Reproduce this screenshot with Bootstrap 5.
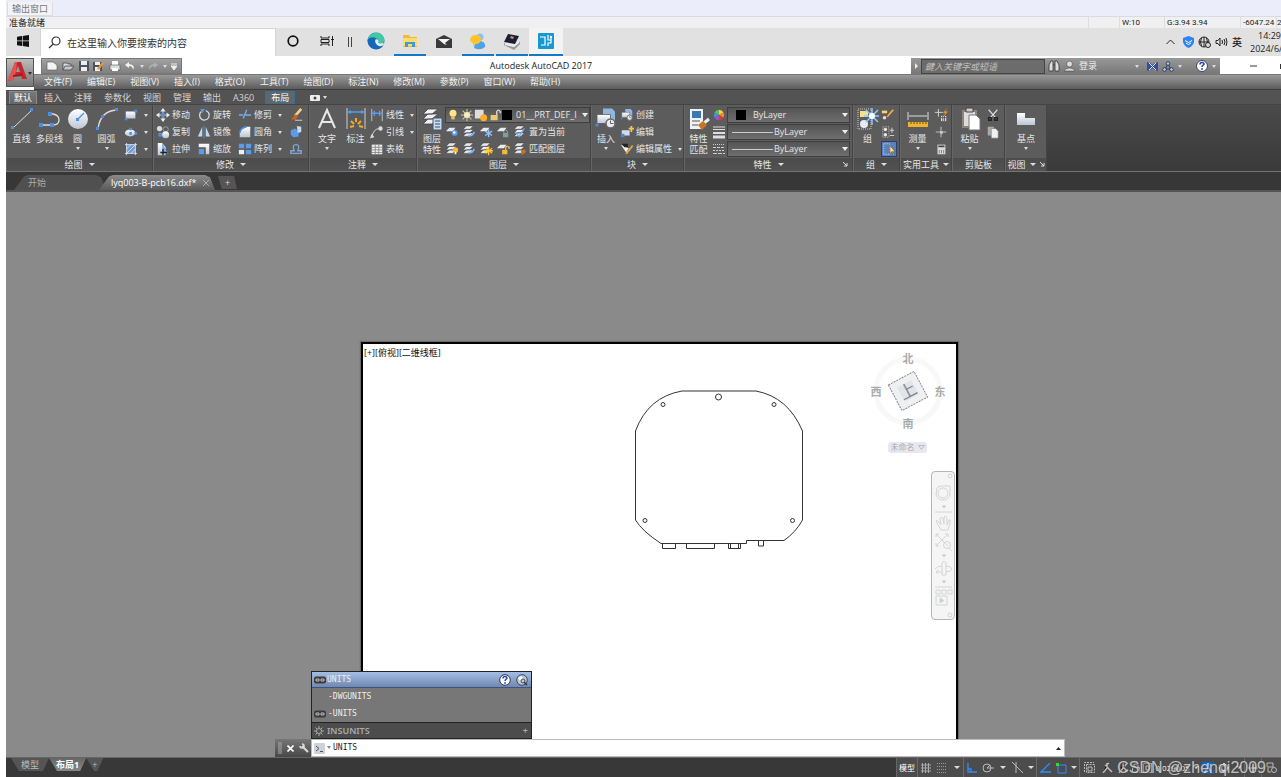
<!DOCTYPE html>
<html lang="zh-CN">
<head>
<meta charset="utf-8">
<meta name="viewport" content="width=device-width, initial-scale=1">
<title>Autodesk AutoCAD 2017</title>
<link href="https://cdn.jsdelivr.net/npm/bootstrap@5.3.0/dist/css/bootstrap.min.css" rel="stylesheet">
<style>
:root{--ui:"Open Sans","Noto Sans CJK SC",sans-serif;--mono:"DejaVu Sans Mono","Noto Sans CJK SC",monospace}
body{font-family:var(--ui);font-size:9px;line-height:12px;color:#e6e6e6;background:#fff;padding-left:6px}
button,input,select{font:inherit;color:inherit;background:none;border:0;padding:0;margin:0}
a{color:inherit;text-decoration:none}
svg{display:block;flex:none}
.i14{width:14px;height:14px}.i24{width:24px;height:24px}
.caret{width:0;height:0;border:2px solid transparent;border-top:3px solid #ddd;border-bottom:0;flex:none}
.caret.wide{border-width:3px 3px 0}
/* output window and task bar */
.outbar{height:16px;background:#ecedfa;color:#777;padding-top:2px}
.outtab{background:#f3f3f7;border:1px solid #ddd;border-top:0;padding:0 4px;height:14px;margin-left:1px}
.readybar{height:12px;background:#f0f0f0;border-top:1px solid #d8dbe2;color:#222;line-height:11px}
.readybar span{border-left:1px solid #dedede;padding-left:2px;font-family:Roboto,"Noto Sans CJK SC",sans-serif;font-size:8px;white-space:nowrap}
.taskbar{height:28px;background:#e1e1e1;color:#222}
.search{width:236px;background:#fff;border:1px solid #d5d5d5;border-bottom:0;padding-left:7px;gap:6px}
.search input{font-size:10px;flex:1;min-width:0;outline:0}
.search input::placeholder{color:#333;opacity:1}
.slot{width:34px;height:28px;border-bottom:2px solid transparent;display:flex;align-items:center;justify-content:center}
.slot.open{border-image:linear-gradient(90deg,transparent 3px,#1878c8 3px 31px,transparent 31px) 2}
.slot.current{background:#f3f3f3;border-color:#1878c8}
.clockbox{width:31px;line-height:13px;overflow:hidden;white-space:nowrap}
/* title and menu */
.logo{width:28px;height:29px;background:linear-gradient(#bbb,#777);border:1px solid #555}
.titlebar{height:16px;color:#222}
.qat{width:141px;background:linear-gradient(#a2a2a2,#808080);border:1px solid #777;padding:0 4px}
.infobar{width:309px;background:linear-gradient(#999,#777);color:#eee}
.infobar input{width:124px;height:15px;background:#6c6c6c;border:1px solid #444;font-style:italic;padding-left:3px;outline:0}
.infobar input::placeholder{color:#c2c2c2;opacity:1}
.menubar{height:16px;background:linear-gradient(#999,#5c5c5c);border-top:1px solid #777;border-bottom:1px solid #3c3c3c;gap:15px;padding-left:10px;color:#f2f2f2}
.tabs{height:14px;background:#535353;gap:2px;padding-left:3px;color:#d5d5d5}
.tabs button{height:13px;padding:0 5px;border:0 solid #777}
.tabs .on{background:linear-gradient(#777,#666);border:1px solid #8a8a8a;border-bottom:0;padding:0 4px;color:#fff}
.tabs .ctx{background:#5d686e;border:1px solid #3f6e8a;padding:0 5px;color:#fff}
/* ribbon */
.ribbon{height:68px;background:linear-gradient(#4a4a4a,#3a3a3a);border-top:1px solid #444;border-bottom:1px solid #747474}
.panel{flex:none;border-right:1px solid #444;background:#5c5c5c;border-left:1px solid #666}
.pbody{height:53px;padding-top:2px}
.pfoot{height:13px;background:linear-gradient(#4b4b4b,#525252);gap:6px}
.big{display:flex;flex-direction:column;align-items:center;line-height:11px;white-space:nowrap;flex:none}
.big svg{margin-bottom:2px}
.big .caret{margin-top:3px}
.stackcol{display:flex;flex-direction:column;gap:1px;flex:none}
.stackcol button,.rowline{height:16px;display:flex;align-items:center;gap:2px;white-space:nowrap}
.stackcol .layers{gap:3px}
.stackcol .caret{margin-left:4px}
.combo{height:16px;border:1px solid #3f3f3f;background:linear-gradient(#555,#6e6e6e);display:flex;align-items:center}
.combo select{appearance:none;flex:1;min-width:0;height:14px;line-height:14px;padding-right:12px;outline:0;
background:url("data:image/svg+xml,%3Csvg xmlns='http://www.w3.org/2000/svg' width='6' height='4'%3E%3Cpath d='M0 0h6L3 4z' fill='%23eee'/%3E%3C/svg%3E") no-repeat right 1px center}
.combo option{color:#222}
.sw{width:10px;height:10px;background:#000;flex:none}
.lw{width:41px;height:1px;background:#ccc;flex:none}
.pressed{background:#5c7fbe;border:1px solid #27406e}
/* document tabs */
.docs{height:20px;background:#373737;border-bottom:2px solid #555;padding:3px 0 0 8px}
.doctab{height:15px;white-space:nowrap;clip-path:polygon(0 100%,10px 10%,14px 0,calc(100% - 10px) 0,calc(100% - 5px) 15%,100% 100%);background:#505050;color:#aaa}
.doctab.on{background:linear-gradient(#8a8a8a,#5a5a5a);color:#fff;padding-left:12px;gap:6px}
.plus{background:#555;color:#ddd;clip-path:polygon(0 0,85% 0,100% 100%,20% 100%)}
/* drawing area */
.area{background:#8a8a8a;display:grid;grid-template-columns:355fr 597fr 323fr;grid-template-rows:150px 1fr}
.paper{grid-column:2;grid-row:2;background:#fff;border:2px solid #000;border-bottom:0;color:#111;box-shadow:0 0 1px 1px #6a6a6a}
.vlabel{padding:3px 0 0 1px}
.part{left:272px;top:45px}
.cube{right:9px;top:5px}
.pill{right:29px;top:98px;background:#e8e8f3;color:#aaa;width:39px;height:11px;border-radius:3px;line-height:11px;font-size:8px;font-family:"Liberation Serif","Noto Sans CJK SC",serif}
.navbox{right:1px;top:127px;width:24px;height:149px;background:#f5f5f5;border:1px solid #b5b5b5;border-radius:4px}
/* command line */
.cmd{left:269px;bottom:0;width:790px}
.pop{left:36px;bottom:18px;width:221px;border:1px solid #222;background:#777;font-family:var(--mono);font-size:8px;color:#eee}
.pop button{display:flex;align-items:center;width:100%;height:17px;gap:1px;padding:0 3px 0 2px;text-align:left}
.pop .sel{height:16px;background:linear-gradient(#a3bde3,#7189b0);border-bottom:1px solid #3d557e}
.pop .var{height:16px;background:#4c4c4c;border-top:1px solid #222;color:#aaa;font-family:"Noto Sans",sans-serif;font-size:9px;font-weight:600}
.grip{width:36px;height:18px;background:linear-gradient(#777,#484848)}
.cmdfield{height:18px;background:#fff;border:1px solid #bbb;color:#222;padding:0 3px 0 2px;gap:2px}
.cmdfield input{font-family:var(--mono);font-size:8px;flex:1;outline:0;min-width:0}
/* status bar */
.status{height:20px;background:#383838;border-top:1px solid #666}
.ltab{height:13px;background:#555;color:#bbb;clip-path:polygon(0 0,100% 0,calc(100% - 6px) 100%,8px 100%);padding:0 10px}
.ltab.on{background:linear-gradient(#666,#888);color:#fff;font-weight:700;padding:0 7px}
.tools{width:385px;background:#4c4c4c;border-left:1px solid #666;font-size:8px}
.tools button,.tools span{display:flex;align-items:center;justify-content:center;height:19px;flex:none}
.w10{width:10px}.w13{width:13px}.w16{width:16px}.w17{width:17px}.w20{width:20px}
.sep{border-left:1px solid #6a6a6a}
.wm{right:15px;bottom:-1px;font:16px/20px "Liberation Sans",sans-serif;color:rgba(225,225,225,.8);text-shadow:1px 1px 1px #444;pointer-events:none}
</style>
</head>
<body class="vh-100 overflow-hidden d-flex flex-column">
<svg width="0" height="0" class="position-absolute" aria-hidden="true">
<defs>
<linearGradient id="gr" x2="0" y2="1"><stop stop-color="#fff"/><stop offset="1" stop-color="#bcc6d4"/></linearGradient>
</defs>
<symbol id="lay" viewBox="0 0 16 16"><path d="M5 1h8l-4 4H1zM5 5h8l-4 4H1zM5 9h8l-4 4H1z" fill="#e8ecf2" stroke="#444" stroke-width=".7"/></symbol>
<symbol id="sheet" viewBox="0 0 16 16"><path d="M5 3h7l-3 4H1z" fill="#e8ecf2"/></symbol>
<symbol id="lb1" viewBox="0 0 16 16"><use href="#sheet"/><circle cx="11" cy="9" r="3.4" fill="#5b9be8"/><circle cx="10.500" cy="8.500" r="1.500" fill="#fff"/></symbol>
<symbol id="lb2" viewBox="0 0 16 16"><use href="#lay"/><path d="M7 12q5 1 7-4" stroke="#7db6f5" stroke-width="2" fill="none"/></symbol>
<symbol id="lb3" viewBox="0 0 16 16"><use href="#sheet"/><path d="M11 5v9M7 7l8 5M15 7l-8 5" stroke="#8cc4ff" stroke-width="1.600"/></symbol>
<symbol id="lb4" viewBox="0 0 16 16"><use href="#sheet"/><path d="M9 9V7q2-3 4 0v2" stroke="#8ab" fill="none"/><path d="M8 9h6v5H8z" fill="#78a29a"/></symbol>
<symbol id="lb5" viewBox="0 0 16 16"><use href="#lay"/><path d="M3 9l4 4 6-9" stroke="#6fb1f5" stroke-width="1.500" fill="none"/></symbol>
<symbol id="lc1" viewBox="0 0 16 16"><use href="#lay"/><circle cx="12" cy="9" r="3" fill="#ffb62e"/><path d="M11 11h2v3h-2z" fill="#eee"/></symbol>
<symbol id="lc3" viewBox="0 0 16 16"><use href="#lay"/><path d="M11 5v10M6 10h10M8 7l7 6M15 7l-7 6" stroke="#ffc738" stroke-width="1.500"/></symbol>
<symbol id="lc4" viewBox="0 0 16 16"><use href="#sheet"/><path d="M11 9V6q2-2 4 0v2" stroke="#f2b93c" stroke-width="1.500" fill="none"/><path d="M7 9h6v5H7z" fill="#f2b93c"/></symbol>
<symbol id="lc5" viewBox="0 0 16 16"><use href="#lay"/><path d="M9 10l4-2 2 3-5 4z" fill="#c87321"/></symbol>
<symbol id="blk" viewBox="0 0 16 16"><path d="M6 1h6l2 2v7H6z" fill="#8fb7e0"/><path d="M2 5h9v6H2z" fill="url(#gr)" stroke="#555" stroke-width=".5"/><circle cx="11" cy="11" r="3" fill="#e8ecf2" stroke="#666"/><path d="M11 9v2h2" stroke="#555" stroke-width=".6" fill="none"/><path d="M1 11h2v2H1z" fill="#4d87d8"/></symbol>
<symbol id="mac" viewBox="0 0 12 8"><rect width="12" height="7" y=".5" rx="2" fill="#3b3b3b"/><path d="M2 3h3v2H2zM7 3h3v2H7z" fill="none" stroke="#ddd" stroke-width=".8"/></symbol>
</svg>

<header>
<div class="outbar d-flex"><button class="outtab">输出窗口</button></div>
<div class="readybar d-flex"><div class="flex-grow-1" style="padding-left:3px">准备就绪</div><span style="width:31px"></span><span style="width:45px">W:10</span><span style="width:76px">G:3.94 3.94</span><span style="width:36px">-6047.24</span><span style="width:5px;padding-left:0">2</span></div>
<div class="taskbar d-flex align-items-stretch">
<button class="slot" aria-label="开始"><svg width="12" height="12" viewBox="0 0 12 12" fill="#111"><path d="M0 1.700l5-.7v4.600H0zM5.700.9L12 0v5.600H5.700zM0 6.300h5V11l-5-.7zM5.700 6.300H12V12l-6.300-.9z"/></svg></button>
<label class="search d-flex align-items-center"><svg width="13" height="13" viewBox="0 0 13 13" fill="none" stroke="#333" stroke-width="1.200"><circle cx="8" cy="5" r="4"/><path d="M5.200 8L1 12"/></svg><input type="text" aria-label="搜索" placeholder="在这里输入你要搜索的内容"></label>
<button class="slot" aria-label="Cortana"><svg width="12" height="12"><circle cx="6" cy="6" r="4.800" fill="none" stroke="#111" stroke-width="1.700"/></svg></button>
<button class="slot" aria-label="任务视图"><svg width="14" height="12" fill="none" stroke="#222"><path d="M1 1v2h8V1M1 11V9h8v2M1 4.500h8v3H1zM12.500 1v10M11 4.500h3"/></svg></button>
<span class="d-flex align-items-center ps-1"><svg width="11" height="11" stroke="#444"><path d="M.5 0v10M3.500 0v10"/></svg></span>
<button class="slot" aria-label="Edge"><svg width="18" height="18" viewBox="0 0 18 18"><circle cx="9" cy="9" r="8.500" fill="#1673c9"/><path d="M.8 8C2-1 15-2 17.300 7c.5 4-3 5-6 4.200 1-2 0-5-3.300-5C4 6 2 7 .8 8z" fill="#41c9a2"/><path d="M.6 8C3 4 9 5 9.500 7.500 7 8 7 12 11 14c2 .6 4 .2 5.400-.8C12 20 1 18 .6 8z" fill="#1568b8"/><path d="M8.500 7.500c2-1 4 1 2.800 3.600 2 .8 4 .4 5.300-.6v2.500c-2 1.500-5 1.500-6.500 0S7.500 9 8.500 7.500z" fill="#e6eef2"/></svg></button>
<button class="slot open" aria-label="文件资源管理器"><svg width="16" height="14"><path d="M1 1h6l1 2h7v10H1z" fill="#f4b935"/><path d="M1 4h14v8H1z" fill="#ffdb6e"/><path d="M3 13V8h10v5h-3v-3H6v3z" fill="#3d9bdc"/></svg></button>
<button class="slot" aria-label="邮件"><svg width="18" height="14"><path d="M1 5l8-4 8 4v9H1z" fill="#3a3a3a"/><path d="M3 5h12l-5 4 2 2-3-1z" fill="#f4f4f4"/></svg></button>
<button class="slot open" aria-label="聊天"><svg width="18" height="17"><circle cx="11" cy="4" r="3.500" fill="#85c4f5"/><path d="M5 15q0-6 6-7 6 1 5 6-5 4-11 1z" fill="#4ba3ea"/><path d="M1 6q1-4 6-4t5 5q-1 4-5 4l-3 2V10Q1 9 1 6z" fill="#ffc32b"/></svg></button>
<button class="slot open" aria-label="扫描仪"><svg width="18" height="17"><path d="M1 10l10 4 6-6v3l-6 6L1 12z" fill="#999"/><path d="M5 1l11 2-4 8-11-2z" fill="#1b1f35"/><path d="M2 10l10 2 5-6-1 4-5 4-9-2z" fill="#eee"/><path d="M8 3l3 1-1 2-3-1z" fill="#e9894f"/></svg></button>
<button class="slot current" aria-label="PCB"><svg width="16" height="16"><rect width="16" height="16" rx="1" fill="#1599cf"/><path d="M2 4h5v8H3M10 2v5h3M10 13v-3h3V5" fill="none" stroke="#fff" stroke-width="1.200"/><circle cx="13" cy="4" r="1.200" fill="#fff"/></svg></button>
<div class="ms-auto d-flex align-items-center">
<svg width="9" height="6" class="me-2" fill="none" stroke="#222"><path d="M.5 5l4-4 4 4"/></svg>
<svg width="11" height="12" class="me-1" viewBox="0 0 11 12"><path d="M5.500 0L11 2v4q-1 4-5.500 6Q1 10 0 6V2z" fill="#2d83f0"/><path d="M2 4.500l3.500 2 3.500-2M3 7l2.500 1.500L8 7" fill="none" stroke="#fff"/></svg>
<svg width="13" height="12" class="me-1" fill="none" stroke="#222"><circle cx="6" cy="6" r="5"/><path d="M1 6h10M6 1v10M3.500 2q-2 4 0 8M8.500 2q2 4 0 8"/><circle cx="10" cy="9" r="2.500" fill="#ddd"/></svg>
<svg width="13" height="10" class="me-1" fill="none" stroke="#222"><path d="M1 3.500h2L5 1v8L3 6.500H1zM7 3q1 2 0 4M9 2q2 3 0 6M11 1q2 4 0 8"/></svg>
<span style="width:18px;font-size:10px;font-weight:500">英</span>
<div class="clockbox"><div class="text-end">14:29</div><div>2024/6/</div></div>
</div>
</div>

<div class="d-flex" style="padding-top:2px">
<button class="logo d-flex align-items-center justify-content-center" aria-label="应用程序菜单"><svg width="26" height="26"><path d="M1 21L8 2h6l6 17h-5l-1-4H8l-2 5z" fill="#c5282c"/><path d="M8 2h2L9 12l-3 8-5 1z" fill="#e65253"/><path d="M9 12l2-6 2 6z" fill="#9a9a9a"/><path d="M6 15l9-2 1 3-10 1z" fill="#a81d22"/><path d="M21 12h4l-2 3z" fill="#333"/></svg></button>
<div class="flex-grow-1">
<div class="titlebar d-flex">
<div style="width:7px"></div>
<div class="qat d-flex align-items-center justify-content-between">
<svg width="12" height="10"><path d="M1 1h6l4 3v5H1z" fill="#f4f4f4" stroke="#555" stroke-width=".6"/></svg>
<svg width="12" height="10"><path d="M1 9V2h4l1 1h3v2" fill="#ddd" stroke="#444" stroke-width=".8"/><path d="M1 9l2-4h9L9 9z" fill="#c3c8ce" stroke="#444" stroke-width=".8"/></svg>
<svg width="10" height="10"><path d="M0 0h10v10H0z" fill="#4b5360"/><path d="M2 0h6v4H2zM2 6h6v4H2z" fill="#eee"/></svg>
<svg width="11" height="11"><path d="M0 1h9v9H0z" fill="#4b5360"/><path d="M2 1h5v3H2zM2 6h5v4H2z" fill="#eee"/><path d="M4 8l5-7 2 1-5 7z" fill="#e99b32"/></svg>
<svg width="12" height="11"><path d="M3 0h6v4H3z" fill="#fff"/><path d="M1 4h10v5H1z" fill="#dcdcdc" stroke="#555" stroke-width=".6"/><path d="M3 7h6v3H3z" fill="#fff"/></svg>
<svg width="10" height="9"><path d="M4 0L0 3l4 3V4q4 0 4 4 3-5-4-6z" fill="#f3f3f3"/></svg><i class="caret"></i>
<svg width="10" height="9"><path d="M6 0l4 3-4 3V4Q2 4 2 8q-3-5 4-6z" fill="#b0b0b0"/></svg><i class="caret"></i>
<svg width="6" height="7"><path d="M0 1h6M0 3h6L3 7z" stroke="#eee" fill="#eee"/></svg>
</div>
<div class="flex-grow-1 text-center" style="padding-right:11px;line-height:16px">Autodesk AutoCAD 2017</div>
<div class="infobar d-flex align-items-center">
<svg width="10" height="8"><path d="M4 1l3 3-3 3z" fill="#eee"/></svg>
<input type="text" aria-label="搜索帮助" placeholder="鍵入关键字或短语">
<svg width="12" height="12" style="margin-left:3px" class="me-1" fill="#ddd" stroke="#333" stroke-width=".8"><path d="M1 11V5l2-4h2v10zM11 11V5L9 1H7v10zM5 5h2"/></svg>
<svg width="11" height="12" class="me-1" fill="#ddd" stroke="#444" stroke-width=".6"><circle cx="5.500" cy="4" r="3"/><path d="M0 11q1-3 5.500-3T11 11z"/></svg>
<a href="#" class="flex-grow-1">登录</a>
<i class="caret me-2"></i>
<svg width="11" height="11"><path d="M0 1q4 1 5.500 3Q7 2 11 1v9q-4-1-5.500-3Q4 9 0 10z" fill="#2f4e9e"/><path d="M2 2l7 7M9 2L2 9" stroke="#dce6fa"/></svg>
<svg width="12" height="11" class="ms-1 me-1" fill="#bfcce8" stroke="#2c3d68"><path d="M6 3L3 8h6z" fill="none"/><circle cx="6" cy="2.500" r="1.800"/><circle cx="2.500" cy="8.500" r="1.800"/><circle cx="9.500" cy="8.500" r="1.800"/></svg>
<i class="caret"></i>
<svg width="12" height="12" style="margin-left:14px"><circle cx="6" cy="6" r="5.500" fill="#fff" stroke="#446"/><path d="M4 4.500q0-2 2-2t2 1.800Q6 5.500 6 7" fill="none" stroke="#24489c" stroke-width="1.500"/><circle cx="6" cy="9" r=".9" fill="#24489c"/></svg>
<i class="caret ms-1 me-1"></i>
</div>
<div class="d-flex align-items-center justify-content-between" style="width:61px;padding-left:30px"><svg width="7" height="2"><path d="M0 1h7" stroke="#333"/></svg><svg width="1" height="5"><path d="M0 0h1v5H0z" fill="#333"/></svg></div>
</div>
<nav class="menubar d-flex align-items-center"><a href="#">文件(F)</a><a href="#">编辑(E)</a><a href="#">视图(V)</a><a href="#">插入(I)</a><a href="#">格式(O)</a><a href="#">工具(T)</a><a href="#">绘图(D)</a><a href="#">标注(N)</a><a href="#">修改(M)</a><a href="#">参数(P)</a><a href="#">窗口(W)</a><a href="#">帮助(H)</a></nav>
</div>
</div>
<div class="tabs d-flex align-items-end"><button class="on">默认</button><button>插入</button><button>注释</button><button>参数化</button><button>视图</button><button>管理</button><button>输出</button><button>A360</button><button class="ctx ms-1">布局</button><button class="d-flex align-items-center" style="gap:3px;padding-left:13px" aria-label="最小化"><svg width="10" height="6"><rect width="10" height="6" rx="1" fill="#eee"/><circle cx="5" cy="3" r="1.500" fill="#444"/></svg><i class="caret"></i></button></div>

<div class="ribbon d-flex">
<section class="panel" style="width:147px"><div class="pbody d-flex">
<button class="big" style="width:29px"><svg class="i24" viewBox="0 0 24 24"><path d="M3 21L22 3" stroke="#ddd"/><path d="M1 19h3v3H1zM20 1h3v3h-3z" fill="#4d8fe6"/></svg>直线</button>
<button class="big" style="width:27px"><svg class="i24" viewBox="0 0 24 24"><path d="M3 18h12q6 0 6-5t-6-6h-3" stroke="#ddd" stroke-width="1.300" fill="none"/><path d="M1 16h4v4H1zM12 16h4v4h-4zM10 5h4v4h-4z" fill="#4d8fe6"/></svg>多段线</button>
<button class="big" style="width:29px"><svg class="i24" viewBox="0 0 24 24"><circle cx="12" cy="12" r="10" fill="url(#gr)"/><path d="M12 12l6-6" stroke="#4d8fe6" stroke-width="1.500"/><path d="M10 11h3v3h-3z" fill="#4d8fe6"/></svg>圆<i class="caret"></i></button>
<button class="big" style="width:29px"><svg class="i24" viewBox="0 0 24 24"><path d="M3 22Q5 4 22 3" stroke="#ddd" stroke-width="1.300" fill="none"/><path d="M1 20h3v3H1zM6 8h3v3H6zM20 1h3v3h-3z" fill="#4d8fe6"/></svg>圆弧<i class="caret"></i></button>
<div class="stackcol" style="padding-left:3px">
<button aria-label="矩形"><svg class="i14" viewBox="0 0 16 16"><path d="M2 4h11v8H2z" fill="url(#gr)"/><path d="M12 2h3v3h-3zM1 11h3v3H1z" fill="#4d8fe6"/></svg><i class="caret ms-1"></i></button>
<button aria-label="椭圆"><svg class="i14" viewBox="0 0 16 16"><ellipse cx="7" cy="9" rx="6" ry="4" fill="url(#gr)"/><path d="M6 3h3v3H6zM6 8h3v3H6zM12 8h3v3h-3z" fill="#4d8fe6"/></svg><i class="caret ms-1"></i></button>
<button aria-label="图案填充"><svg class="i14" viewBox="0 0 16 16"><path d="M3 3h10v10H3z" fill="#6f9bd2"/><path d="M1 3h14M1 13h14M3 1v14M13 1v14M3 13L13 3M3 8l5-5M8 13l5-5" stroke="#dce6f5" fill="none"/></svg><i class="caret ms-1"></i></button>
</div></div><div class="pfoot d-flex align-items-center justify-content-center">绘图<i class="caret wide"></i></div></section>

<section class="panel" style="width:156px"><div class="pbody d-flex" style="padding-left:2px">
<div class="stackcol" style="width:41px">
<button><svg class="i14" viewBox="0 0 16 16"><path d="M8 1v14M1 8h14" stroke="#ddd"/><path d="M8 0l3 4H5zM8 16l3-4H5zM0 8l4-3v6zM16 8l-4-3v6z" fill="#e6ebf2"/><path d="M6 6h4v4H6z" fill="#4d8fe6"/></svg>移动</button>
<button><svg class="i14" viewBox="0 0 16 16"><circle cx="4" cy="4" r="3" fill="#ddd"/><circle cx="11" cy="5" r="3" fill="none" stroke="#9ab"/><circle cx="5" cy="11" r="2.500" fill="#4d8fe6"/><circle cx="11" cy="11" r="4" fill="url(#gr)"/></svg>复制</button>
<button><svg class="i14" viewBox="0 0 16 16"><path d="M2 1h5l4 5v9H2z" fill="url(#gr)"/><path d="M7 1l7 12H7z" fill="#7aa9e4"/><path d="M8 8v7M5 12h8" stroke="#222" stroke-width="1.500"/></svg>拉伸</button></div>
<div class="stackcol" style="width:41px">
<button><svg class="i14" viewBox="0 0 16 16"><path d="M10 3a5.500 5.500 0 1 1-5 1" fill="none" stroke="#d5dbe4" stroke-width="1.500"/><path d="M4 1h5L6 6z" fill="#5b9be8"/></svg>旋转</button>
<button><svg class="i14" viewBox="0 0 16 16"><path d="M6 2v11H1zM10 2v11h5z" fill="#c5d5ea"/><path d="M8 1v14" stroke="#4d8fe6"/></svg>镜像</button>
<button><svg class="i14" viewBox="0 0 16 16"><path d="M2 2h12v12h-4V6H2z" fill="url(#gr)"/><path d="M2 8h6v6H2z" fill="#5b9be8"/></svg>缩放</button></div>
<div class="stackcol" style="width:51px">
<button><svg class="i14" viewBox="0 0 16 16"><path d="M1 8h5M6 12L10 2M8 8h7" stroke="#79aeea" stroke-width="1.500"/></svg>修剪<i class="caret"></i></button>
<button><svg class="i14" viewBox="0 0 16 16"><path d="M2 14V9q1-6 8-7h4v12z" fill="url(#gr)"/><path d="M2 9q1-6 8-7" stroke="#4d8fe6" stroke-width="2" fill="none"/></svg>圆角<i class="caret"></i></button>
<button><svg class="i14" viewBox="0 0 16 16"><path d="M1 2h6v5H1zM9 2h6v5H9zM9 9h6v5H9z" fill="#5b9be8"/><path d="M1 9h6v5H1z" fill="#eee"/></svg>阵列<i class="caret"></i></button></div>
<div class="stackcol">
<button aria-label="删除"><svg class="i14" viewBox="0 0 16 16"><path d="M14 1L7 9" stroke="#f1d18b" stroke-width="3"/><path d="M8 7L2 13h6l2-4z" fill="#d3611d"/><path d="M7 14h8" stroke="#ddd"/></svg></button>
<button aria-label="分解"><svg class="i14" viewBox="0 0 16 16"><path d="M2 6l5-2 4 3v6l-6 1-3-3z" fill="#5b9be8"/><path d="M9 1l5 1v6l-4 1z" fill="#c6dcf5"/></svg></button>
<button aria-label="偏移"><svg class="i14" viewBox="0 0 16 16"><path d="M2 13h12v-3h-4q3-7-2-7t-2 7H2z" fill="none" stroke="#7fa8d8" stroke-width="1.500"/></svg></button></div>
</div><div class="pfoot d-flex align-items-center justify-content-center">修改<i class="caret wide"></i></div></section>

<section class="panel" style="width:108px"><div class="pbody d-flex" style="padding-left:3px">
<button class="big" style="width:28px"><svg class="i24" viewBox="0 0 24 24"><path d="M4 21L12 3l8 18M7 15h10" stroke="#e8e8e8" stroke-width="2" fill="none"/></svg>文字<i class="caret"></i></button>
<button class="big" style="width:29px"><svg class="i24" viewBox="0 0 24 24"><path d="M3 1v21M21 1v21" stroke="#ccc"/><path d="M4 5h16" stroke="#4d9cf0" stroke-width="1.500"/><path d="M3 5l4-2v4zM21 5l-4-2v4z" fill="#4d9cf0"/><path d="M6 20l4-1M7 14l3 3M12 11v4M17 14l-3 3M19 20l-4-1" stroke="#f4a92c" stroke-width="2"/></svg>标注</button>
<div class="stackcol">
<button><svg class="i14" viewBox="0 0 16 16"><path d="M2 1v14M14 1v14" stroke="#ccc"/><path d="M2 6h12M5 3v6M11 3v6" stroke="#5b9be8" stroke-width="1.500"/></svg>线性<i class="caret"></i></button>
<button><svg class="i14" viewBox="0 0 16 16"><path d="M2 14Q4 4 11 4" stroke="#ddd" fill="none"/><circle cx="12" cy="4" r="2.500" fill="#ddd"/><path d="M0 15l5-1-3-4z" fill="#ddd"/></svg>引线<i class="caret"></i></button>
<button><svg class="i14" viewBox="0 0 16 16"><path d="M2 3h12v11H2z" fill="#eee"/><path d="M2 6h12M2 9h12M2 12h12M6 3v11M10 3v11" stroke="#888"/></svg>表格</button></div>
</div><div class="pfoot d-flex align-items-center justify-content-center">注释<i class="caret wide"></i></div></section>

<section class="panel" style="width:174px"><div class="pbody d-flex" style="padding-left:1px">
<button class="big" style="width:26px"><svg class="i24" viewBox="0 0 24 24"><path d="M8 2h10l-6 5H3zM8 7h10l-6 5H3zM8 12h10l-6 5H3z" fill="#eef1f5" stroke="#444" stroke-width=".8"/><path d="M13 11h9v12h-9z" fill="#c9d9f0" stroke="#456"/><path d="M15 14h5M15 17h5M15 20h5" stroke="#37517d"/></svg>图层<br>特性</button>
<div class="stackcol flex-grow-1">
<div class="combo"><svg class="i14" viewBox="0 0 16 16"><circle cx="8" cy="6" r="4" fill="#ffe58a"/><path d="M6 9h4v4H6z" fill="#e7c25a"/></svg><svg class="i14" viewBox="0 0 16 16"><path d="M8 1v14M1 8h14M3 3l10 10M13 3L3 13" stroke="#cfc5a0" stroke-width="1.200"/><circle cx="8" cy="8" r="3.500" fill="#f7ecc0"/></svg><svg class="i14" viewBox="0 0 16 16"><path d="M1 2h10v10H1z" fill="#ddd"/><circle cx="11" cy="11" r="4" fill="#ffae2b"/></svg><svg class="i14" viewBox="0 0 16 16"><path d="M10 8V4q2-3 4 0v2" stroke="#ddd" stroke-width="1.500" fill="none"/><path d="M3 8h8v6H3z" fill="#edcb6d"/></svg><i class="sw me-1"></i><select aria-label="图层"><option>01__PRT_DEF_I</option></select></div>
<div class="rowline layers"><svg class="i14"><use href="#lb1"/></svg><svg class="i14"><use href="#lb2"/></svg><svg class="i14"><use href="#lb3"/></svg><svg class="i14"><use href="#lb4"/></svg><button><svg class="i14"><use href="#lb5"/></svg>置为当前</button></div>
<div class="rowline layers"><svg class="i14"><use href="#lc1"/></svg><svg class="i14"><use href="#lb2"/></svg><svg class="i14"><use href="#lc3"/></svg><svg class="i14"><use href="#lc4"/></svg><button><svg class="i14"><use href="#lc5"/></svg>匹配图层</button></div>
</div></div><div class="pfoot d-flex align-items-center justify-content-center">图层<i class="caret wide"></i></div></section>

<section class="panel" style="width:93px"><div class="pbody d-flex">
<button class="big" style="width:28px"><svg class="i24"><use href="#blk"/></svg>插入<i class="caret"></i></button>
<div class="stackcol">
<button><svg class="i14"><use href="#blk"/></svg>创建</button>
<button><svg class="i14" viewBox="0 0 16 16"><path d="M2 6h9v6H2z" fill="#cfdcee"/><path d="M13 1v7M10 4h6" stroke="#ffc53b" stroke-width="2"/><path d="M1 10h4v4H1z" fill="#4d87d8"/></svg>编辑</button>
<button><svg class="i14" viewBox="0 0 16 16"><path d="M1 3l6 9 3-5z" fill="#eee"/><path d="M6 13l8-10 1 2-7 9z" fill="#e8a642"/><path d="M2 2h7v4H5z" fill="#222"/></svg>编辑属性<i class="caret ms-1"></i></button></div>
</div><div class="pfoot d-flex align-items-center justify-content-center">块<i class="caret wide"></i></div></section>

<section class="panel" style="width:169px"><div class="pbody d-flex">
<button class="big" style="width:27px"><svg class="i24" viewBox="0 0 24 24"><path d="M3 2h13v20H3z" fill="#f0f2f5"/><path d="M5 4h9v7H5z" fill="#3a77b5"/><path d="M5 14h8M5 18h6" stroke="#555"/><path d="M22 12l-5 4" stroke="#eee" stroke-width="3"/><path d="M11 18l5-4 4 4-5 5z" fill="#c8741f"/></svg>特性<br>匹配</button>
<div class="stackcol" style="width:15px">
<div class="rowline"><svg class="i14" viewBox="0 0 16 16"><path d="M8 8V2a6 6 0 0 1 5.200 3z" fill="#f5d13b"/><path d="M8 8l5.200-3a6 6 0 0 1 0 6z" fill="#f08b2b"/><path d="M8 8l5.200 3A6 6 0 0 1 8 14z" fill="#d63b3b"/><path d="M8 8v6a6 6 0 0 1-5.200-3z" fill="#a44fc2"/><path d="M8 8l-5.200 3a6 6 0 0 1 0-6z" fill="#4a8be0"/><path d="M8 8L2.800 5A6 6 0 0 1 8 2z" fill="#5bbf55"/></svg></div>
<div class="rowline"><svg width="13" height="14" stroke="#ddd"><path d="M1 2h12M1 4.500h12"/><path d="M1 8h12" stroke-width="2"/><path d="M1 12h12" stroke-width="3"/></svg></div>
<div class="rowline"><svg width="13" height="14" stroke="#ccc"><path d="M1 2.500h12" stroke-dasharray="1 1"/><path d="M1 5.500h12" stroke-dasharray="3 1"/><path d="M1 8.500h12" stroke-dasharray="2 1"/><path d="M1 11.500h12" stroke-dasharray="4 1"/></svg></div></div>
<div class="stackcol" style="width:123px">
<div class="combo" style="padding-left:8px;gap:7px"><i class="sw"></i><select aria-label="颜色"><option>ByLayer</option></select></div>
<div class="combo" style="padding-left:4px;gap:1px"><i class="lw"></i><select aria-label="线宽"><option>ByLayer</option></select></div>
<div class="combo" style="padding-left:4px;gap:1px"><i class="lw"></i><select aria-label="线型"><option>ByLayer</option></select></div>
</div></div><div class="pfoot d-flex align-items-center position-relative justify-content-center">特性<i class="caret wide"></i><svg width="5" height="5" class="position-absolute end-0 me-1"><path d="M0 0l4 4M4 1v3H1" stroke="#ddd" fill="none"/></svg></div></section>

<section class="panel" style="width:47px"><div class="pbody d-flex">
<button class="big" style="width:27px"><svg class="i24" viewBox="0 0 24 24"><path d="M2 2h13v20H2z" stroke="#ccc" stroke-dasharray="1 1" fill="none"/><path d="M4 4h8v6H4z" fill="#f1e18a"/><circle cx="8" cy="17" r="4" fill="#e8ecf2"/><path d="M16 1v17M8 9h15M10 3l12 12M22 3L10 15" stroke="#8cc8ff" stroke-width="1.500"/><circle cx="16" cy="9" r="3" fill="#fff"/></svg>组</button>
<div class="stackcol">
<button aria-label="解除编组"><svg class="i14" viewBox="0 0 16 16"><path d="M1 3h6v3H1z" fill="#eadb7c"/><path d="M14 2L7 10" stroke="#f0b24b" stroke-width="2"/><circle cx="4" cy="11" r="2" fill="#ddd"/><path d="M2 8h6" stroke="#c33"/></svg></button>
<button aria-label="编辑组"><svg class="i14" viewBox="0 0 16 16"><path d="M2 2h7v12H2z" stroke="#ccc" stroke-dasharray="1 1" fill="none"/><circle cx="5" cy="5" r="2" fill="#e6e6e6"/><circle cx="5" cy="11" r="2" fill="#e6e6e6"/><path d="M10 6h5M12.500 3v6M10 12h5" stroke="#ddd"/></svg></button>
<button aria-label="组选择" class="pressed"><svg class="i14" viewBox="0 0 16 16"><path d="M2 2h7v12H2z" stroke="#dde" stroke-dasharray="1 1" fill="none"/><path d="M9 4v9l2-2 2 4 1-1-2-3h3z" fill="#ffe37a" stroke="#333" stroke-width=".5"/></svg></button></div>
</div><div class="pfoot d-flex align-items-center justify-content-center">组<i class="caret wide"></i></div></section>

<section class="panel" style="width:52px"><div class="pbody d-flex">
<button class="big" style="width:33px"><svg class="i24" viewBox="0 0 24 24"><path d="M2 5v8M22 5v8M3 9h18" stroke="#ddd"/><path d="M2 15h20v5H2z" fill="#eeb42e"/><path d="M5 15v2M8 15v2M11 15v2M14 15v2M17 15v2M20 15v2" stroke="#7a5300"/></svg>测量<i class="caret"></i></button>
<div class="stackcol">
<button aria-label="快速选择"><svg class="i14" viewBox="0 0 16 16"><path d="M5 1v9M1 5h9" stroke="#ddd"/><path d="M15 0l-5 6h3l-3 5 6-7h-3z" fill="#f28c28"/><path d="M8 9h6v6H8z" fill="#ddd"/><path d="M8 11h6M10 9v6M12 9v6" stroke="#555"/></svg></button>
<button aria-label="点坐标"><svg class="i14" viewBox="0 0 16 16"><path d="M8 2v12M2 8h12" stroke="#ccc"/><path d="M7 7h3v3H7z" fill="#ccc"/></svg></button>
<button aria-label="计算器"><svg class="i14" viewBox="0 0 16 16"><path d="M4 3h9v11H4z" fill="#ddd"/><path d="M5 5h7" stroke="#444" stroke-width="2"/><path d="M6 9v4M8.500 9v4M11 9v4" stroke="#777"/></svg></button></div>
</div><div class="pfoot d-flex align-items-center justify-content-center" style="gap:4px">实用工具<i class="caret wide"></i></div></section>

<section class="panel" style="width:53px"><div class="pbody d-flex">
<button class="big" style="width:33px"><svg class="i24" viewBox="0 0 24 24"><path d="M4 3h15v18H4z" fill="#8d8577"/><path d="M6 5h11v14H6z" fill="#ddd"/><path d="M8 1h7v4H8z" fill="#ccc" stroke="#444"/><path d="M11 8h7l4 4v11H11z" fill="#fff" stroke="#777"/></svg>粘贴<i class="caret"></i></button>
<div class="stackcol">
<button aria-label="剪切"><svg class="i14" viewBox="0 0 16 16"><path d="M3 2l8 9M13 2L5 11" stroke="#ddd" stroke-width="1.300"/><path d="M3 11h3v3H3zM10 11h3v3h-3z" fill="none" stroke="#222" stroke-width="1.500"/></svg></button>
<button aria-label="复制"><svg class="i14" viewBox="0 0 16 16"><path d="M2 2h7v10H2z" fill="#aaa"/><path d="M6 4h5l3 3v8H6z" fill="#f0f0f0" stroke="#666" stroke-width=".6"/></svg></button></div>
</div><div class="pfoot d-flex align-items-center justify-content-center">剪贴板</div></section>

<section class="panel" style="width:42px"><div class="pbody d-flex justify-content-center">
<button class="big"><svg class="i24" viewBox="0 0 24 24"><path d="M3 6h8v5h10v7H3z" fill="url(#gr)"/></svg>基点<i class="caret"></i></button>
</div><div class="pfoot d-flex align-items-center justify-content-center" style="gap:4px">视图<i class="caret wide"></i><svg width="5" height="5"><path d="M0 0l4 4M4 1v3H1" stroke="#ddd" fill="none"/></svg></div></section>
</div>

<div class="docs d-flex">
<button class="doctab text-start" style="width:92px;padding-left:14px">开始</button>
<button class="doctab on d-flex align-items-center" style="width:116px;margin-left:-7px">lyq003-B-pcb16.dxf*<svg width="6" height="6" stroke="#aaa"><path d="M0 0l6 6M6 0L0 6"/></svg></button>
<button class="plus" style="width:19px;height:13px;margin-top:1px;margin-left:3px" aria-label="新图形">+</button>
</div>
</header>

<main class="area flex-grow-1 position-relative overflow-hidden">
<div class="paper position-relative">
<div class="vlabel">[+][俯视][二维线框]</div>
<svg class="part position-absolute" width="170" height="162" fill="none" stroke="#333"><path d="M.5 42Q13 8 47 2H121Q153 8 167.500 42V131Q161 143 149 151.500H111.500V154.500H26Q7 142 .5 131z"/><circle cx="83.500" cy="8" r="3"/><circle cx="28" cy="15.500" r="2"/><circle cx="139" cy="15.500" r="2"/><circle cx="10" cy="131.500" r="2"/><circle cx="157.500" cy="131.500" r="2"/><path d="M27.500 154.500h13v5h-13zM51.500 154.500h28v5h-28zM93.500 154.500h12v5h-12zM95.500 154.500v5M103.500 154.500v5M123.500 151.500h5v5.500h-5z"/></svg>
<svg class="cube position-absolute" width="78" height="86" viewBox="0 -3 78 86" font-family="Noto Sans CJK SC,sans-serif" font-size="11" font-weight="700" fill="#aaa" text-anchor="middle"><circle cx="39" cy="39" r="32" fill="none" stroke="#f8f8f8" stroke-width="5"/><g transform="rotate(-28 39 39)"><path d="M24.500 24.500h29v29h-29z" fill="#eff0f2" stroke="#888" stroke-dasharray="2 1"/><path d="M31 31h16v16H31z" fill="#e1e4ea"/><text x="39" y="45" font-size="17" font-weight="400" fill="#888">上</text></g><text x="39" y="11">北</text><text x="39" y="76">南</text><text x="7" y="44">西</text><text x="71" y="44">东</text></svg>
<button class="pill position-absolute d-flex align-items-center justify-content-center" style="gap:3px">未命名<svg width="7" height="5" fill="none" stroke="#bbb"><path d="M.5.5h6l-3 4z"/></svg></button>
<div class="navbox position-absolute"><svg width="22" height="147" fill="none" stroke="#d2d6d6"><circle cx="18" cy="4" r="2"/><path d="M5 16q1-2 6-2h7v8q-1 6-7 6t-7-6zM3 40h17"/><circle cx="11" cy="21" r="5"/><path d="M10 34h4l-2 2zM10 83h4l-2 2zM10 109h4l-2 2z" fill="#bbb"/><path d="M5 51q-2-4 1-2l3 4-1-7q2-2 3 1l1 5V45q2-2 3 1v7l2-5q2-1 1 3l-2 7H9zM4 62l12 12M16 62L4 74M4 65v-3h3M13 62h3v3M4 71v3h3M3 115h17"/><circle cx="15" cy="73" r="3.500"/><path d="M17 76l3 3M10 103V91l2-2 2 2v12zM3 97q2-3 7-3M14 94q5 0 6 3-1 3-6 3M10 100H4l2-2M4 100l2 2M4 118h4v4H4zM10 118h4v4h-4zM16 118h4v4h-4zM4 124h11v9H4z"/><path d="M8 126v5l4-2.500z" fill="#ccc"/><circle cx="18" cy="143" r="2"/></svg></div>
</div>

<div class="cmd position-absolute d-flex">
<div class="pop position-absolute">
<button class="sel"><svg width="12" height="8"><use href="#mac"/></svg><span class="flex-grow-1">UNITS</span><svg width="12" height="12"><circle cx="6" cy="6" r="5.300" fill="#fff" stroke="#335"/><path d="M4 4.500q0-2 2-2t2 1.800Q6 5.500 6 7" fill="none" stroke="#2450b0" stroke-width="1.500"/><circle cx="6" cy="9" r=".9" fill="#2450b0"/></svg><svg width="12" height="12" class="ms-1"><circle cx="6" cy="6" r="5.300" fill="#b9ccd0" stroke="#446"/><path d="M2 4l3-2 2 2-3 3z" fill="#f4f8f8"/><circle cx="7" cy="7" r="2" fill="none" stroke="#456"/><path d="M8 8l3 3" stroke="#333" stroke-width="1.500"/></svg></button>
<button style="padding-left:16px">-DWGUNITS</button>
<button><svg width="12" height="8"><use href="#mac"/></svg><span style="padding-left:1px">-UNITS</span></button>
<button class="var"><svg width="12" height="12" stroke="#aaa" fill="none"><circle cx="5" cy="6" r="2.500"/><path d="M5 1v2M5 9v2M0 6h2M8 6h2M1.500 2.500L3 4M7 8l1.500 1.500M8.500 2.500L7 4M3 8L1.500 9.500"/></svg><span class="flex-grow-1">INSUNITS</span>+</button>
</div>
<div class="grip d-flex align-items-center justify-content-around"><svg width="4" height="12" stroke="#aaa"><path d="M0 1h4M0 3h4M0 5h4M0 7h4M0 9h4M0 11h4"/></svg><button aria-label="关闭"><svg width="7" height="7" stroke="#fff" stroke-width="1.600"><path d="M.5.5l6 6M6.500.5l-6 6"/></svg></button><button aria-label="自定义"><svg width="10" height="10"><path d="M3 3l6 6" stroke="#ddd" stroke-width="2"/><path d="M1 3q0 2 2 2t2-2-2-2" fill="none" stroke="#ddd" stroke-width="1.500"/></svg></button></div>
<label class="cmdfield d-flex align-items-center flex-grow-1"><svg width="11" height="11"><rect width="11" height="11" rx="1" fill="#cdd2da"/><path d="M2 3l3 2.500L2 8M6 8.500h3" fill="none" stroke="#555"/></svg><svg width="4" height="5"><path d="M0 0h4L2 3z" fill="#888"/></svg><input type="text" aria-label="命令" value="UNITS"><svg width="5" height="3"><path d="M0 3h5L2.500 0z" fill="#222"/></svg></label>
</div>
</main>

<footer class="status d-flex justify-content-between position-relative">
<div class="d-flex" style="padding-left:5px"><button class="ltab">模型</button><button class="ltab on">布局1</button><button class="ltab" style="padding:0 6px" aria-label="新建布局">+</button></div>
<div class="tools d-flex">
<button class="w20" style="color:#fff">模型</button>
<button class="w17 sep" aria-label="栅格"><svg width="10" height="10" stroke="#aaa"><path d="M1.500 0v10M4.500 0v10M7.500 0v10M0 2h10M0 5h10M0 8h10"/></svg></button>
<button class="w16" aria-label="捕捉"><svg width="10" height="10" stroke="#999" stroke-dasharray="1 1"><path d="M0 .5h10M0 3.500h10M0 6.500h10M0 9.500h10"/></svg></button>
<button class="w13" aria-label="捕捉选项"><i class="caret wide"></i></button>
<button class="w16 sep" aria-label="正交"><svg width="10" height="10"><path d="M1 0v9h9M1 6h3v3" fill="none" stroke="#2f8bff" stroke-width="1.300"/></svg></button>
<button class="w17" aria-label="极轴"><svg width="12" height="10" fill="none" stroke="#bbb"><circle cx="5" cy="5" r="4"/><path d="M5 5h7M5 5l3-3"/></svg></button>
<button class="w13" aria-label="极轴选项"><i class="caret wide"></i></button>
<button class="w17" aria-label="等轴测"><svg width="11" height="11" stroke="#bbb"><path d="M0 0l11 11M4 0v11"/></svg></button>
<button class="w10" aria-label="等轴测选项"><i class="caret wide"></i></button>
<button class="w17 sep" aria-label="追踪"><svg width="11" height="10" fill="none" stroke="#2f8bff" stroke-width="1.300"><path d="M10 0L1 9h10"/></svg></button>
<button class="w16" aria-label="对象捕捉"><svg width="12" height="12"><path d="M3 3h8v8H3z" fill="none" stroke="#2f8bff"/><path d="M1 1h3v3H1z" fill="#2ddc34"/></svg></button>
<button class="w10" aria-label="对象捕捉选项"><i class="caret wide"></i></button>
<button class="w20 sep" aria-label="选择"><svg width="11" height="11" fill="none" stroke="#bbb"><path d="M.5 10V.5H10M2.500 2.500h8v8h-8z" stroke-dasharray="2 1"/><path d="M4 5h4v4H4z"/></svg></button>
<button class="w16" aria-label="注释可见性"><svg width="11" height="11" stroke="#bbb" stroke-width="1.500"><path d="M5 1v5L1 11M5 5l5 5M3 4l4-3"/></svg></button>
<button class="w16" aria-label="自动缩放"><svg width="11" height="11" stroke="#bbb" stroke-width="1.500"><path d="M5 1v5L1 11M5 5l5 5M7 4l2-3"/></svg></button>
<button class="w10" aria-label="锁定"><svg width="8" height="10" fill="none" stroke="#bbb"><path d="M.5 4.500h7v5h-7zM2 4V1h4v3"/></svg></button>
<button class="w13" aria-label="视口"><svg width="9" height="10" fill="none" stroke="#bbb"><path d="M.5.5h8v9h-8zM3 3h3v4H3z"/></svg></button>
<span style="width:37px;color:#fff">0.029005</span>
<button class="w10" aria-label="比例"><i class="caret wide"></i></button>
<button class="w13" aria-label="注释比例"><svg width="12" height="12"><path d="M0 0h12v12H0z" fill="#1762c9"/><path d="M6 1v5L2 11M6 5l4 6" stroke="#bcd6ff" stroke-width="1.500" fill="none"/></svg></button>
<button class="w20" aria-label="工作空间"><svg width="10" height="10"><circle cx="5" cy="5" r="3" fill="none" stroke="#ccc" stroke-width="2"/><path d="M5 0v2M5 8v2M0 5h2M8 5h2" stroke="#ccc" stroke-width="2"/></svg></button>
<button class="w10" aria-label="工作空间选项"><i class="caret wide"></i></button>
<button class="w17 sep" aria-label="监视器"><svg width="10" height="10" stroke="#ccc" stroke-width="1.500"><path d="M5 0v10M0 5h10"/></svg></button>
<button class="w20 sep" aria-label="隔离对象"><svg width="11" height="11" fill="none" stroke="#bbb"><path d="M1 1h6v4H1zM2 6v4h3"/><circle cx="8" cy="8" r="2.500"/></svg></button>
</div>
<div class="wm position-absolute">CSDN @zhenqi2009</div>
</footer>
<script src="https://cdn.jsdelivr.net/npm/bootstrap@5.3.0/dist/js/bootstrap.bundle.min.js"></script>
</body>
</html>
